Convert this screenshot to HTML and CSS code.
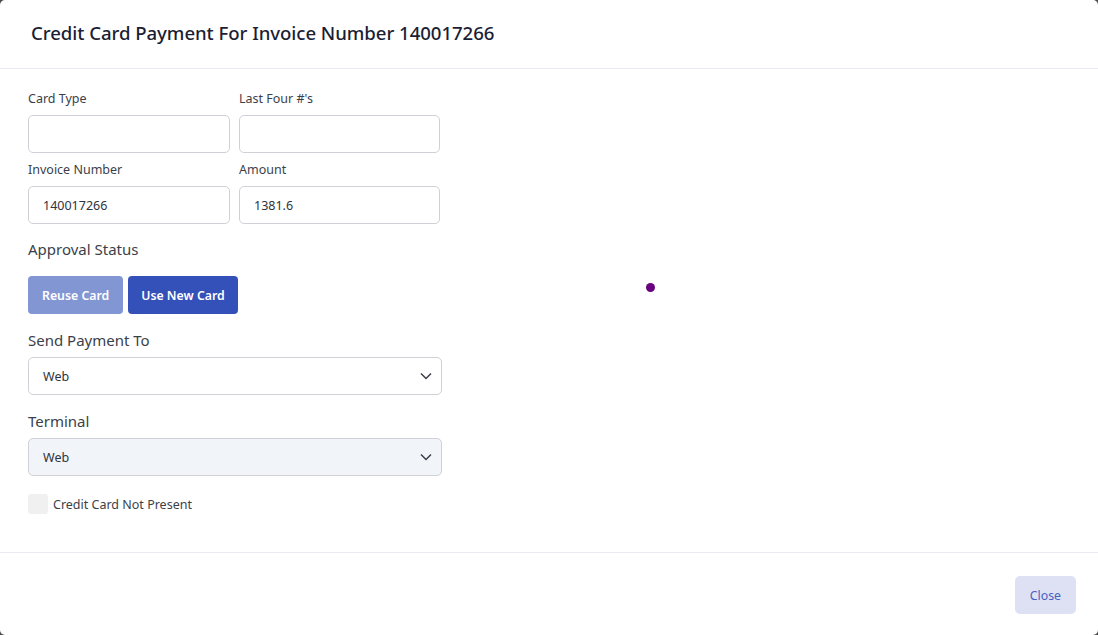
FILE: index.html
```html
<!DOCTYPE html>
<html lang="en">
<head>
  <meta charset="UTF-8"/>
  <title>Credit Card Payment</title>
  <link rel="stylesheet" href="styles.css">
</head>
<body>

<div class="modal">
  <div class="modal-header">
    <h2>Credit Card Payment For Invoice Number 140017266</h2>
  </div>

  <div class="modal-body">
    <div class="form-col">
      <div class="grid">
        <label class="field">
          <span>Card Type</span>
          <input type="text">
        </label>
        <label class="field">
          <span>Last Four #'s</span>
          <input type="text">
        </label>
        <label class="field">
          <span>Invoice Number</span>
          <input type="text" value="140017266">
        </label>
        <label class="field">
          <span>Amount</span>
          <input type="text" value="1381.6">
        </label>
      </div>

      <div class="section-label">Approval Status</div>
      <div class="btn-row">
        <button type="button" class="btn btn-light">Reuse Card</button>
        <button type="button" class="btn btn-primary">Use New Card</button>
      </div>

      <div class="section-label">Send Payment To</div>
      <div class="select">
        <span>Web</span>
        <svg width="14" height="14" viewBox="0 0 14 14"><path d="M2 4.5l5 5 5-5" fill="none" stroke="#3b3f4a" stroke-width="1.5"/></svg>
      </div>

      <div class="section-label">Terminal</div>
      <div class="select select-disabled">
        <span>Web</span>
        <svg width="14" height="14" viewBox="0 0 14 14"><path d="M2 4.5l5 5 5-5" fill="none" stroke="#3b3f4a" stroke-width="1.5"/></svg>
      </div>

      <label class="check">
        <span class="box"></span>
        Credit Card Not Present
      </label>
    </div>

    <div class="spinner-area">
      <span class="dot"></span>
    </div>
  </div>

  <div class="modal-footer">
    <button type="button" class="btn btn-close">Close</button>
  </div>
</div>

</body>
</html>
```

FILE: styles.css
```css
* { box-sizing: border-box; }
html, body { height: 100%; }
body {
  margin: 0;
  background: #4a4a4a;
  font-family: 'Noto Sans', sans-serif;
  color: #3b3f4a;
}
.modal {
  height: 100%;
  background: #fff;
  border-radius: 5px;
  display: flex; flex-direction: column;
}
.modal-header {
  height: 69px;
  border-bottom: 1px solid #e9e9f0;
  padding: 0 31px 3px;
  display: flex; align-items: center;
}
.modal-header h2 {
  margin: 0; font-size: 18.6px; font-weight: 500; color: #1b1e34;
  letter-spacing: -0.05px;
}
.modal-body {
  display: flex;
  padding: 21px 28px 0;
  height: 484px;
  border-bottom: 1px solid #e9e9f0;
}
.form-col { width: 414px; }
.grid {
  display: grid; grid-template-columns: 202px 201px; column-gap: 9px; row-gap: 8px;
}
.field { display: flex; flex-direction: column; }
.field span { font-size: 12.5px; line-height: 18px; margin-bottom: 7px; }
.field input {
  height: 38px; border: 1px solid #cfd1d6; border-radius: 5px;
  padding: 0 14px; font-family: inherit; font-size: 12.5px; color: #2f3340;
  background: #fff;
}
.section-label { font-size: 15px; line-height: 20px; margin: 15px 0 0; }
.btn-row { display: flex; gap: 5px; margin: 17px 0 0; }
.btn-row + .section-label { margin-top: 16px; }
.btn {
  height: 38px; border: none; border-radius: 4px; padding: 0 14px;
  font-family: inherit; font-size: 12.3px; font-weight: 600; color: #fff; cursor: pointer;
}
.btn-primary { padding: 0 13px; }
.btn-light { background: #8396d4; }
.btn-primary { background: #3450b9; }
.select {
  margin-top: 7px;
  height: 38px; border: 1px solid #cfd1d6; border-radius: 5px;
  display: flex; align-items: center; justify-content: space-between;
  padding: 0 8px 0 14px; font-size: 12.5px; color: #2f3340;
}
.select-disabled { background: #f1f4f8; }
.select + .section-label { margin-top: 16px; }
.check {
  display: flex; align-items: center; gap: 5px;
  margin-top: 18px; font-size: 12.5px;
}
.check .box {
  width: 20px; height: 20px; border-radius: 3px; background: #f0f0f0;
}
.spinner-area { flex: 1; display: flex; padding-top: 193px; padding-left: 204px; }
.dot {
  width: 9px; height: 9px; border-radius: 50%; background: #680080;
}
.modal-footer {
  flex: 1;
  display: flex; justify-content: flex-end; align-items: center;
  padding: 2px 22px 0;
}
.btn-close {
  background: #dde1f3; color: #4a5fc0; font-weight: 400; padding: 0 15px;
  border-radius: 5px;
}
```
